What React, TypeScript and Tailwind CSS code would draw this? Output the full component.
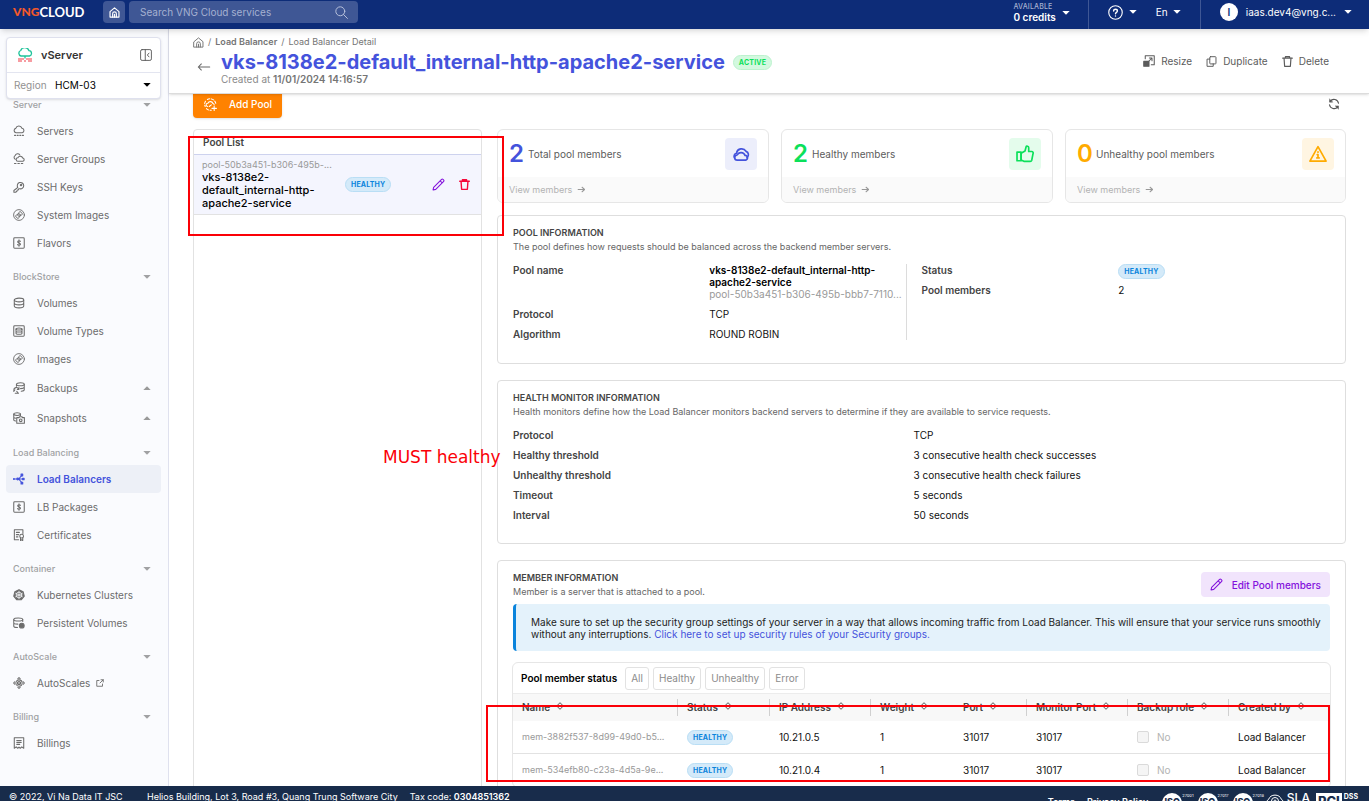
import type { ReactNode } from 'react';

type IconProps = { className?: string; children: ReactNode; sw?: number };

function Svg({ className = 'size-3', children, sw = 1.4 }: IconProps) {
  return (
    <svg
      viewBox="0 0 16 16"
      className={`shrink-0 ${className}`}
      fill="none"
      stroke="currentColor"
      strokeWidth={sw}
      strokeLinecap="round"
      strokeLinejoin="round"
      aria-hidden="true"
    >
      {children}
    </svg>
  );
}

function Caret({ up = false, className = '' }: { up?: boolean; className?: string }) {
  return (
    <svg viewBox="0 0 8 4" className={`h-1 w-2 shrink-0 ${className}`} fill="currentColor" aria-hidden="true">
      <path d={up ? 'M0.3 4 L4 0.2 L7.7 4Z' : 'M0.3 0 L4 3.8 L7.7 0Z'} />
    </svg>
  );
}

const homePath = (
  <>
    <path d="M1.500 6.800 8 1.300l6.500 5.500V14.700H1.500Z" />
    <path d="M5.300 14.500V9.800a2.700 2.700 0 0 1 5.400 0v4.700M8 14.500V10.500" />
  </>
);

const icons = {
  server: (
    <>
      <path d="M4 10.200a2.900 2.900 0 0 1-.3-5.700 4.300 4.300 0 0 1 8.200-.2A3 3 0 0 1 12.300 10.200Z" />
      <path d="M2 13.800h1.500M5.500 13.800h1.500M9 13.800h1.500M12.500 13.800h1.500" />
    </>
  ),
  serverGroup: (
    <>
      <path d="M3 8.300A2.700 2.700 0 0 1 2.800 3.500a3.500 3.500 0 0 1 6.300-.8" />
      <path d="M6.500 11a2.300 2.300 0 0 1 0-4.600 3.400 3.400 0 0 1 6.400.3A2.200 2.200 0 0 1 13.300 11Z" />
      <path d="M2 14h2M6.500 14h2M11 14h2" />
    </>
  ),
  key: (
    <>
      <path d="M6.400 8.600A4.300 4.300 0 1 1 9 10.400L7.600 10.300 7.200 12 5.600 12.100 5.300 13.700 3.500 15H1.200V12.700Z" />
      <circle cx="10.700" cy="5.400" r="1" />
    </>
  ),
  disc: (
    <g strokeWidth="1.200">
      <circle cx="8" cy="8" r="7.200" />
      <circle cx="8" cy="8" r="1.700" />
      <path d="M6.800 6.500 9 3.300a5 5 0 0 1 3.700 3.700L9.500 9.200M9.200 9.500 7 12.700A5 5 0 0 1 3.300 9L6.500 6.800" />
    </g>
  ),
  dollar: (
    <>
      <rect x="1" y="1" width="14" height="14" rx="1.200" />
      <path d="M10 5.800C9.500 4.600 6.300 4.500 6.200 6.300 6.100 8.200 10 7.600 10 9.700 9.900 11.500 6.500 11.400 6 10.100M8 3.800v8.400" />
    </>
  ),
  volume: (
    <>
      <ellipse cx="8" cy="4" rx="6.300" ry="2.500" />
      <path d="M1.700 4v8c0 1.400 2.800 2.500 6.300 2.500s6.300-1.100 6.300-2.500V4M1.700 8c0 1.400 2.800 2.500 6.300 2.500s6.300-1.100 6.300-2.500" />
    </>
  ),
  volumeType: (
    <>
      <rect x="1" y="1" width="14" height="14" rx="1.200" />
      <ellipse cx="8" cy="5.300" rx="4" ry="1.400" />
      <path d="M4 5.300v5.600c0 .8 1.800 1.400 4 1.400s4-.6 4-1.400V5.300M4 8c0 .8 1.800 1.400 4 1.400S12 8.800 12 8" />
    </>
  ),
  backup: (
    <>
      <ellipse cx="9.800" cy="3" rx="5.200" ry="2" />
      <path d="M4.600 3v2.700M15 3v7.300c0 1-1.700 1.800-4 1.900M15 6.800c0 1.200-2.200 2-5 2" />
      <path d="M1 11a3.500 3.500 0 0 1 6.700-1.500M8 7.500v2.300H5.700M1 12.500l1.500-1.800M3 15h3.500M5 12.500 7.300 15" />
    </>
  ),
  snapshot: (
    <>
      <ellipse cx="5.500" cy="2.800" rx="4.500" ry="1.800" />
      <path d="M1 3v7.500c0 .8 1 1.300 2.500 1.500M10 3v1.500M1 6.500c0 .9 1.300 1.500 3 1.700" />
      <path d="M5 7.500H8l.8-1.300h3l.8 1.300H15.200V15H5Z" />
      <circle cx="10.300" cy="11" r="1.800" />
    </>
  ),
  balancer: (
    <>
      <path d="M1 8h12M7.500 8 11.500 3.500M7.500 8l4 4.500" />
      <g fill="currentColor">
        <circle cx="6.300" cy="8" r="1.200" />
        <circle cx="1.200" cy="8" r=".5" />
        <rect x="10.700" y="1.500" width="2.300" height="2.300" />
        <rect x="10.700" y="12.200" width="2.300" height="2.300" />
        <rect x="12.800" y="7" width="2" height="2" />
      </g>
    </>
  ),
  certificate: (
    <>
      <path d="M7.500 14.300H1.800V1h11.400v5M4.500 4.500h4M4.500 7.500h3M4.500 10.500h2" />
      <circle cx="11.500" cy="9.500" r="2.500" />
      <path d="M10 11.800V15.300l1.500-1 1.500 1V11.800" />
    </>
  ),
  kube: (
    <>
      <path d="M8 1 13.500 3.600 15 9.500 11.200 14.300H4.800L1 9.500 2.500 3.600Z" fill="currentColor" />
      <g stroke="#fafbfe" strokeWidth="1">
        <circle cx="8" cy="8" r="3.800" />
        <path d="M8 3v10M3.500 5.700l9 4.600M12.500 5.700l-9 4.600" />
      </g>
    </>
  ),
  persistent: (
    <>
      <ellipse cx="7" cy="3.300" rx="6" ry="2.100" />
      <path d="M1 3.500v8.700c0 1 2.500 1.800 5 1.900M13 3.500V6M1 7.500c0 1 2.700 1.900 5.500 2" />
      <circle cx="11.700" cy="11.500" r="3.200" fill="currentColor" />
    </>
  ),
  autoscale: (
    <>
      <circle cx="8" cy="8" r="4.200" />
      <path d="M6 7 8 6l2 1v2.300L8 10.300 6 9.300ZM8 8v2" />
      <path d="M6.500 2.200 8 .8l1.500 1.400M6.500 13.800 8 15.200l1.500-1.400M2.200 6.500.8 8l1.400 1.500M13.800 6.500 15.200 8l-1.400 1.500" />
    </>
  ),
  bill: (
    <>
      <path d="M1.700 1h12.600v14l-2.600-1.800L9.700 15 8 13.500 6.300 15l-2-1.800L1.700 15Z" />
      <path d="M5 4.800h6M5 7.300h6M5 9.800h4" />
    </>
  ),
};

type NavItem = { label: string; icon: keyof typeof icons; expandable?: boolean; active?: boolean; external?: boolean };

const nav: { title: string; items: NavItem[] }[] = [
  {
    title: 'Server',
    items: [
      { label: 'Servers', icon: 'server' },
      { label: 'Server Groups', icon: 'serverGroup' },
      { label: 'SSH Keys', icon: 'key' },
      { label: 'System Images', icon: 'disc' },
      { label: 'Flavors', icon: 'dollar' },
    ],
  },
  {
    title: 'BlockStore',
    items: [
      { label: 'Volumes', icon: 'volume' },
      { label: 'Volume Types', icon: 'volumeType' },
      { label: 'Images', icon: 'disc' },
      { label: 'Backups', icon: 'backup', expandable: true },
      { label: 'Snapshots', icon: 'snapshot', expandable: true },
    ],
  },
  {
    title: 'Load Balancing',
    items: [
      { label: 'Load Balancers', icon: 'balancer', active: true },
      { label: 'LB Packages', icon: 'dollar' },
      { label: 'Certificates', icon: 'certificate' },
    ],
  },
  {
    title: 'Container',
    items: [
      { label: 'Kubernetes Clusters', icon: 'kube' },
      { label: 'Persistent Volumes', icon: 'persistent' },
    ],
  },
  { title: 'AutoScale', items: [{ label: 'AutoScales', icon: 'autoscale', external: true }] },
  { title: 'Billing', items: [{ label: 'Billings', icon: 'bill' }] },
];

function TopBar() {
  return (
    <header className="relative z-20 flex h-[29px] shrink-0 items-stretch bg-[#0d2c78] text-white shadow-md shadow-black/10">
      <div className="flex items-center pb-[5px] pl-[13px]">
        <a href="#home" className="flex w-[90px] items-center font-[Lato]" aria-label="VNG Cloud">
          <span className="text-[12px] leading-4 font-black text-[#f4592a]">VNG</span>
          <span className="text-[13px] leading-4 font-bold">CLOUD</span>
        </a>
        <button type="button" aria-label="Home" className="flex size-[22px] items-center justify-center rounded-sm bg-[#3f5795]">
          <Svg className="size-[11px]" sw={1.700}>{homePath}</Svg>
        </button>
        <div className="ml-1 flex h-[22px] w-[229px] items-center rounded-sm bg-[#3f5795] pr-[10px] pl-[11px]">
          <input
            type="search"
            aria-label="Search VNG Cloud services"
            placeholder="Search VNG Cloud services"
            className="min-w-0 flex-1 bg-transparent text-[10px] leading-4 text-white outline-none placeholder:text-[#a5b1d1]"
          />
          <Svg className="size-[13px] text-[#b9c2dc]" sw={1.200}>
            <circle cx="6.500" cy="6.500" r="5.500" />
            <path d="m10.500 10.500 4.800 4.800" />
          </Svg>
        </div>
      </div>
      <div className="ml-auto flex items-stretch">
        <button type="button" className="flex items-center gap-1.5 border-r border-[#3f5795] pr-[18px] pb-1">
          <span className="flex flex-col items-start">
            <span className="text-[7px] leading-[9px] font-medium tracking-wide text-[#a5b1d1]">AVAILABLE</span>
            <span className="text-[10px] leading-3 font-semibold">0 credits</span>
          </span>
          <Caret />
        </button>
        <div className="flex items-center border-r border-[#3f5795] pr-[19px] pb-[5px] pl-[19px]">
          <button type="button" aria-label="Help" className="flex items-center gap-1.5">
            <Svg className="size-[15px]" sw={1.200}>
              <circle cx="8" cy="8" r="7.200" />
              <path d="M6 6.400C6 3.800 10 3.900 10 6.300 10 7.900 8 7.800 8 9.400M8 11.600v.2" strokeWidth="1.500" />
            </Svg>
            <Caret />
          </button>
          <button type="button" className="ml-[19px] flex items-center gap-[5px] text-[10px] leading-3">
            En
            <Caret />
          </button>
        </div>
        <button type="button" className="flex items-center pr-[17px] pb-[5px] pl-[19px] text-[10px] leading-3">
          <span className="flex size-[18px] items-center justify-center rounded-full bg-white text-[10px] font-semibold text-[#0d2c78]">I</span>
          <span className="ml-2">iaas.dev4@vng.c...</span>
          <Caret className="ml-2" />
        </button>
      </div>
    </header>
  );
}

function Sidebar() {
  return (
    <aside className="relative flex w-[169px] shrink-0 flex-col overflow-hidden border-r border-[#dfe1ee] bg-[#fafbfe]">
      <div className="relative z-10 mx-1.5 mt-2 mr-[7px] shrink-0 rounded border border-[#dfe1ee] bg-white shadow-sm">
        <div className="flex h-[35px] items-center border-b border-[#e3e5f0] px-[10px]">
          <svg viewBox="0 0 16 14" className="h-[14px] w-4" fill="none" strokeLinejoin="round" aria-hidden="true">
            <path d="M4 8a2.900 2.900 0 0 1-.3-5.500 4.400 4.400 0 0 1 8.300.2A2.700 2.700 0 0 1 12.500 8Z" stroke="#1fc39a" strokeWidth="1.300" />
            <path d="M8 8v2.500" stroke="#1fc39a" strokeWidth="1.300" />
            <path d="M1 11h6M9 11h6M1 13h4M7 13h2M11 13h4" stroke="#f03a47" strokeWidth="1.200" />
          </svg>
          <span className="ml-2 text-[11px] leading-4 font-semibold text-[#333]">vServer</span>
          <button type="button" aria-label="Collapse menu" className="-mr-0.5 ml-auto text-[#555]">
            <Svg sw={1.200}>
              <rect x=".8" y=".8" width="14.400" height="14.400" rx="2" />
              <path d="M7 1v14M12 5.500 9.800 8 12 10.500" />
            </Svg>
          </button>
        </div>
        <div className="flex h-[25px] items-center px-[7px] pb-px text-[10px] leading-3">
          <label htmlFor="region" className="w-[41px] text-[#929292]">Region</label>
          <select id="region" className="min-w-0 flex-1 appearance-none bg-transparent text-black outline-none">
            <option>HCM-03</option>
          </select>
          <Caret className="pointer-events-none mr-[2px] text-black" />
        </div>
      </div>
      <nav className="-mt-[6px] flex flex-col gap-2 pr-[7px] pl-1.5" aria-label="vServer">
        {nav.map((group) => (
          <section key={group.title}>
            <button type="button" className="flex h-6 w-full items-center justify-between pr-[10px] pl-[7px] text-[9px] leading-3 font-medium text-[#a0a1a3]">
              {group.title}
              <Caret />
            </button>
            {group.items.map((item) => (
              <a
                key={item.label}
                href="#nav"
                aria-current={item.active ? 'page' : undefined}
                className={`flex items-center rounded pr-[10px] pl-[7px] text-[10px] leading-3 ${item.expandable ? 'h-[30px]' : 'h-7'} ${
                  item.active ? 'bg-[#edf0f7] font-semibold text-[#4453dc]' : 'text-[#6c6c6c]'
                }`}
              >
                <Svg>{icons[item.icon]}</Svg>
                <span className="ml-3">{item.label}</span>
                {item.external && (
                  <Svg className="ml-1.5 size-2" sw={1.800}>
                    <path d="M6 3H1.500v11.500H13V10M8 8l6.500-6.500M10 1.500h4.500V6" />
                  </Svg>
                )}
                {item.expandable && <Caret up className="ml-auto text-[#999]" />}
              </a>
            ))}
          </section>
        ))}
      </nav>
    </aside>
  );
}

function Badge({ tone = 'blue', children }: { tone?: 'blue' | 'green'; children: ReactNode }) {
  return (
    <span
      className={`inline-flex h-[15px] items-center rounded-full border px-[5px] text-[7px] leading-none font-bold tracking-wide ${
        tone === 'blue' ? 'border-[#b9def5] bg-[#d4eaf9] text-[#0a84dc]' : 'border-[#bdf2cf] bg-[#d3f9df] text-[#0be05a]'
      }`}
    >
      {children}
    </span>
  );
}

const pencil = <path d="M1.300 14.700 2 11.500 11.800 1.700a1.200 1.200 0 0 1 1.700 0l.9.900a1.200 1.200 0 0 1 0 1.700L4.600 14ZM10 3.500 12.600 6" />;
const trash = (
  <>
    <path d="M1 3.200h14M5 3V1h6v2" />
    <path d="M3 3.500 3.800 15h8.400L13 3.500" />
  </>
);

function PageHeader() {
  return (
    <div className="relative z-10 flex h-[65px] shrink-0 items-start border-b border-[#dcdcdc] bg-white pr-10 pl-6 shadow-sm">
      <div className="flex flex-col pt-[7px]">
        <nav aria-label="Breadcrumb" className="flex h-3 items-center gap-1 text-[9px] leading-3 text-[#757575]">
          <a href="#home" aria-label="Home"><Svg className="size-[11px]">{homePath}</Svg></a>
          <span>/</span>
          <a href="#lb" className="font-semibold">Load Balancer</a>
          <span>/</span>
          <span>Load Balancer Detail</span>
        </nav>
        <div className="flex items-start">
          <button type="button" aria-label="Back" className="mt-3 mr-1.5 ml-1 text-[#666]">
            <Svg className="size-[14px]" sw={1.200}>
              <path d="M14.500 8h-13M5 4.500 1.500 8 5 11.500" />
            </Svg>
          </button>
          <div className="ml-1">
            <div className="flex items-center gap-2 pt-0.5">
              <h1 className="text-[20px] leading-6 font-bold text-[#4453dc]">vks-8138e2-default_internal-http-apache2-service</h1>
              <Badge tone="green">ACTIVE</Badge>
            </div>
            <p className="text-[10px] leading-[11px] text-[#8a8a8a]">
              Created at <span className="font-semibold text-[#757575]">11/01/2024 14:16:57</span>
            </p>
          </div>
        </div>
      </div>
      <div className="mt-[26px] ml-auto flex items-center gap-[14px] text-[10px] leading-3 text-[#5c5c5c]">
        <button type="button" className="flex items-center gap-1.5">
          <Svg>
            <path d="M3 5V1h12v12h-4M8 8l4-4M8.500 4H12v3.500" />
            <rect x="1" y="8.500" width="7" height="6.500" fill="currentColor" />
          </Svg>
          Resize
        </button>
        <button type="button" className="flex items-center gap-1.5">
          <Svg className="size-[11px]">
            <rect x="5.500" y="1" width="9" height="10.500" rx="1" />
            <path d="M5.500 4.500h-4V15h9v-3.500" />
          </Svg>
          Duplicate
        </button>
        <button type="button" className="flex items-center gap-1.5">
          <Svg className="size-[11px]" sw={1.700}>{trash}</Svg>
          Delete
        </button>
      </div>
    </div>
  );
}

const stats = [
  {
    value: '2',
    label: 'Total pool members',
    number: 'text-[#4453dc]',
    box: 'bg-[#eceefb] text-[#4453dc]',
    icon: (
      <>
        <path d="M4.800 13.500a2.300 2.300 0 0 1-.2-4.600 3.800 3.800 0 0 1 7 .3 2.200 2.200 0 0 1 .6 4.300Z" />
        <path d="M2.200 11.500a3 3 0 0 1 1.800-4.300 4.600 4.600 0 0 1 8.500-1.500 3.200 3.200 0 0 1 .9 5.500" />
      </>
    ),
  },
  {
    value: '2',
    label: 'Healthy members',
    number: 'text-[#0be05a]',
    box: 'bg-[#e4fcec] text-[#0be05a]',
    icon: (
      <>
        <path d="M.9 6.300h3.600V14H.9Z" />
        <path d="M4.500 7.300 8 5.300 9 1.500c.3-.9 2.300-.6 2.300 1V5.800H14c1 0 1.400.9 1.200 1.700l-1.200 6c-.2.700-.7 1-1.400 1H7L4.500 13.300Z" />
      </>
    ),
  },
  {
    value: '0',
    label: 'Unhealthy pool members',
    number: 'text-[#ffab00]',
    box: 'bg-[#fff5e2] text-[#ffab00]',
    icon: (
      <>
        <path d="M8 1.500 15.200 14.300H.8Z" />
        <path d="M8 6v.5M7.300 8.500H8v3M7 11.500h2" />
      </>
    ),
  },
];

function Stats() {
  return (
    <div className="grid grid-cols-[272fr_272fr_281fr] gap-3">
      {stats.map((s) => (
        <article key={s.label} className="overflow-hidden rounded-md border border-[#e6e6e6] bg-white">
          <div className="flex h-[47px] items-center px-[11px]">
            <span className={`w-[19px] text-[24px] leading-6 font-semibold ${s.number}`}>{s.value}</span>
            <span className="text-[10px] leading-3 text-[#5c5c5c]">{s.label}</span>
            <span className={`ml-auto flex size-8 items-center justify-center rounded ${s.box}`}>
              <Svg className="size-[18px]" sw={1.500}>{s.icon}</Svg>
            </span>
          </div>
          <a href="#members" className="flex h-[25px] items-center gap-[5px] bg-[#fafafa] px-[11px] text-[9px] leading-3 text-[#b3b3b3]">
            View members
            <Svg className="size-[9px] text-[#999]" sw={1.800}>
              <path d="M2 8h11M9 4l4.500 4L9 12" />
            </Svg>
          </a>
        </article>
      ))}
    </div>
  );
}

function CardTitle({ title, text }: { title: string; text: string }) {
  return (
    <div>
      <h2 className="text-[9px] leading-4 font-semibold text-[#444]">{title}</h2>
      <p className="text-[9px] leading-3 text-[#666]">{text}</p>
    </div>
  );
}

function Field({ label, children }: { label: string; children: ReactNode }) {
  return (
    <div className="grid grid-cols-2 text-[10px] leading-3">
      <dt className="font-semibold text-[#444]">{label}</dt>
      <dd className="min-w-0 text-[#111]">{children}</dd>
    </div>
  );
}

const card = 'rounded border border-[#dedede] bg-white px-[15px] pt-[9px]';

const columns = [
  { label: 'Name', width: 'w-[165px]', divider: true },
  { label: 'Status', width: 'w-[92px]', divider: true },
  { label: 'IP Address', width: 'w-[101px]', divider: true },
  { label: 'Weight', width: 'w-[83px]', divider: false },
  { label: 'Port', width: 'w-[73px]', divider: true },
  { label: 'Monitor Port', width: 'w-[101px]', divider: true },
  { label: 'Backup role', width: 'w-[101px]', divider: true },
  { label: 'Created by', width: 'w-[101px]', divider: false },
];

const members = [
  { name: 'mem-3882f537-8d99-49d0-b5...', ip: '10.21.0.5' },
  { name: 'mem-534efb80-c23a-4d5a-9e...', ip: '10.21.0.4' },
];

function Members() {
  return (
    <section className={`${card} pb-4`}>
      <div className="flex items-start justify-between">
        <CardTitle title="MEMBER INFORMATION" text="Member is a server that is attached to a pool." />
        <button type="button" className="mt-[2px] flex h-[25px] items-center gap-[9px] rounded bg-[#f1e4fc] px-[9px] text-[10px] leading-3 font-medium text-[#8312dc]">
          <Svg className="size-[13px]" sw={1.300}>{pencil}</Svg>
          Edit Pool members
        </button>
      </div>
      <p className="mt-[6px] rounded border-l-[3px] border-[#0a84dc] bg-[#e4f2fb] pt-3 pr-2 pb-[11px] pl-[15px] text-[10px] leading-3 text-[#222]">
        Make sure to set up the security group settings of your server in a way that allows incoming traffic from Load Balancer. This will ensure that your service runs smoothly without any interruptions.{' '}
        <a href="#security" className="text-[#4453dc]">Click here to set up security rules of your Security groups.</a>
      </p>
      <div className="-mx-px mt-[11px] overflow-hidden rounded-md border border-[#e6e6e6]">
        <div className="flex h-[30px] items-center gap-1 pl-2 text-[10px] leading-3">
          <span className="mr-1 font-semibold text-black">Pool member status</span>
          {['All', 'Healthy', 'Unhealthy', 'Error'].map((f) => (
            <button key={f} type="button" className="h-[23px] rounded-[3px] border border-[#e2e2e2] px-[5px] text-[#8c8c8c]">
              {f}
            </button>
          ))}
        </div>
        <table className="w-full table-fixed text-left text-[10px] leading-3">
          <thead className="border-t border-[#ececec] bg-[#f8f8f8]">
            <tr className="h-[27px]">
              {columns.map((c) => (
                <th key={c.label} className={`p-0 font-semibold text-[#444] ${c.width}`}>
                  <button type="button" className={`flex h-[17px] w-full items-center gap-[7px] pl-[9px] whitespace-nowrap ${c.divider ? 'border-r border-[#d0d0d0]' : ''}`}>
                    {c.label}
                    <svg viewBox="0 0 6 8" className="mb-0.5 h-2 w-1.5" fill="none" stroke="#555" aria-hidden="true">
                      <path d="M.5 3.200 3 .7l2.500 2.500M.5 4.800 3 7.300l2.500-2.500" />
                    </svg>
                  </button>
                </th>
              ))}
            </tr>
          </thead>
          <tbody>
            {members.map((m) => (
              <tr key={m.ip} className="h-[33px] border-b border-[#e2e2e2] text-[#111] last:border-0">
                <td className="p-0 pl-[9px] text-[9px] text-[#999]">{m.name}</td>
                <td className="p-0 pt-px pl-[9px] align-middle"><span className="flex"><Badge>HEALTHY</Badge></span></td>
                <td className="p-0 pl-[9px]">{m.ip}</td>
                <td className="p-0 pl-[9px]">1</td>
                <td className="p-0 pl-[9px]">31017</td>
                <td className="p-0 pl-[9px]">31017</td>
                <td className="p-0 pl-[9px]">
                  <label className="flex items-center gap-2 text-[#b3b3b3]">
                    <input type="checkbox" disabled className="size-3 appearance-none rounded-[2px] border border-[#dadada] bg-[#f5f5f5]" />
                    No
                  </label>
                </td>
                <td className="p-0 pl-[9px]">Load Balancer</td>
              </tr>
            ))}
          </tbody>
        </table>
      </div>
    </section>
  );
}

function PoolList() {
  return (
    <section className="rounded-t border border-[#e2e2e2] bg-white">
      <h2 className="h-[25px] border-b border-[#cdd2ee] pl-[9px] text-[10px] leading-6 font-semibold text-[#444]">Pool List</h2>
      <div className="flex items-center border-b border-[#e2e2e2] bg-[#f4f5fe] py-1 pr-[11px] pl-2">
        <div className="w-[143px] shrink-0">
          <p className="text-[9px] leading-3 text-[#999]">pool-50b3a451-b306-495b-...</p>
          <p className="w-[120px] text-[11px] leading-[13px] font-medium text-black">vks-8138e2-default_internal-http-apache2-service</p>
        </div>
        <Badge>HEALTHY</Badge>
        <button type="button" aria-label="Edit pool" className="ml-auto text-[#8312dc]">
          <Svg className="size-[13px]" sw={1.300}>{pencil}</Svg>
        </button>
        <button type="button" aria-label="Delete pool" className="ml-[14px] text-[#f5093a]">
          <Svg className="size-[11px]" sw={2}>{trash}</Svg>
        </button>
      </div>
    </section>
  );
}

function Content() {
  return (
    <main className="relative flex-1 overflow-hidden bg-white pr-[23px] pl-6">
      <div className="-mt-1 flex h-7 items-center justify-between">
        <button type="button" className="flex h-7 items-center gap-3 rounded-b bg-[#ff8200] pr-[10px] pl-[11px] text-[10px] leading-3 font-medium text-white shadow">
          <Svg className="size-[13px]" sw={1.300}>
            <path d="M14.500 6.500A7 7 0 0 0 4 2M1.800 4A7 7 0 0 0 1.500 10.500M3 13a7 7 0 0 0 6 2" strokeDasharray="3 2" />
            <path d="M4.500 10.500a2 2 0 0 1 .3-4 3.300 3.300 0 0 1 6.200.3 2 2 0 0 1 1.500 1.500M6.500 10.500 9 8.500M12.500 10v5.500M9.800 12.800h5.500" />
          </Svg>
          Add Pool
        </button>
        <button type="button" aria-label="Refresh" className="mr-[6px] text-[#555]">
          <Svg sw={1.500}>
            <path d="M14 7A6.200 6.200 0 0 0 3 4.200M2 9a6.200 6.200 0 0 0 11 2.800" />
            <path d="M2 1.500V5.500H6ZM14 14.500v-4H10Z" fill="currentColor" strokeWidth=".6" />
          </Svg>
        </button>
      </div>
      <div className="mt-[11px] grid grid-cols-[289fr_849fr] items-stretch gap-[15px]">
        <PoolList />
        <div className="min-w-0">
          <Stats />
          <section className={`${card} mt-3 pb-[23px]`}>
            <CardTitle title="POOL INFORMATION" text="The pool defines how requests should be balanced across the backend member servers." />
            <div className="mt-[11px] grid grid-cols-2">
              <dl className="mr-[15px] flex flex-col gap-2 border-r border-[#dcdcdc]">
                <Field label="Pool name">
                  <p className="font-semibold text-black">vks-8138e2-default_internal-http-apache2-service</p>
                  <p className="truncate text-[#999]">pool-50b3a451-b306-495b-bbb7-7110...</p>
                </Field>
                <Field label="Protocol">TCP</Field>
                <Field label="Algorithm">ROUND ROBIN</Field>
              </dl>
              <dl className="mr-[15px] flex flex-col gap-2">
                <Field label="Status">
                  <span className="flex h-3 items-center pt-0.5"><Badge>HEALTHY</Badge></span>
                </Field>
                <Field label="Pool members">2</Field>
              </dl>
            </div>
          </section>
          <section className={`${card} mt-4 pb-[22px]`}>
            <CardTitle title="HEALTH MONITOR INFORMATION" text="Health monitors define how the Load Balancer monitors backend servers to determine if they are available to service requests." />
            <dl className="mt-[11px] mr-4 flex flex-col gap-2">
              <Field label="Protocol">TCP</Field>
              <Field label="Healthy threshold">3 consecutive health check successes</Field>
              <Field label="Unhealthy threshold">3 consecutive health check failures</Field>
              <Field label="Timeout">5 seconds</Field>
              <Field label="Interval">50 seconds</Field>
            </dl>
          </section>
          <div className="mt-4">
            <Members />
          </div>
        </div>
      </div>
    </main>
  );
}

function Iso({ code }: { code: string }) {
  return (
    <span className="flex items-start">
      <span className="flex size-5 justify-center rounded-full bg-white pt-1 text-[9px] leading-[9px] font-extrabold text-[#182c4b]">ISO</span>
      <span className="text-[4px] leading-[6px]">{code}</span>
    </span>
  );
}

function Footer() {
  return (
    <footer className="relative z-20 flex h-[15px] shrink-0 items-start justify-between overflow-hidden bg-[#182c4b] pr-[11px] pl-[9px] text-[9px] leading-3 text-white">
      <div className="flex pt-[5px]">
        <span className="w-[138px]">© 2022, Vi Na Data IT JSC</span>
        <span>Helios Building, Lot 3, Road #3, Quang Trung Software City</span>
        <span className="ml-3">Tax code: <b className="font-semibold">0304851362</b></span>
      </div>
      <div className="flex items-start pt-[7px]">
        <a href="#terms" className="mt-[3px] font-semibold">Terms</a>
        <a href="#privacy" className="mt-[3px] mr-[14px] ml-3 font-semibold">Privacy Policy</a>
        <div className="flex gap-1">
          <Iso code="27001" />
          <Iso code="27017" />
          <Iso code="27018" />
        </div>
        <svg viewBox="0 0 20 18" className="ml-px h-[18px] w-5" fill="none" stroke="#fff" aria-hidden="true">
          <path d="M4 14a4 4 0 0 1-.5-7.500A7 7 0 0 1 16.500 6.500 4 4 0 0 1 16 14" />
          <circle cx="10" cy="8" r="3.500" />
          <circle cx="10" cy="8" r="1" />
        </svg>
        <span className="ml-0.5 text-[12px] leading-[9px] font-medium">SLA</span>
        <span className="ml-1.5 bg-white px-0.5 pt-0.5 text-[13px] leading-[12px] font-extrabold text-[#182c4b]">PCI</span>
        <span className="ml-0.5 text-[7px] leading-2 font-bold">DSS</span>
      </div>
    </footer>
  );
}

export default function App() {
  return (
    <div className="relative flex h-screen flex-col overflow-hidden bg-white font-[Inter,sans-serif]">
      <TopBar />
      <div className="flex min-h-0 flex-1">
        <Sidebar />
        <div className="flex min-w-0 flex-1 flex-col">
          <PageHeader />
          <Content />
        </div>
      </div>
      <Footer />
      <div className="pointer-events-none absolute top-[136px] left-[188px] z-30 h-[100px] w-[316px] border-2 border-[#fb0007]" />
      <div className="pointer-events-none absolute top-[705px] left-[486px] z-30 h-[77px] w-[844px] border-2 border-[#fb0007]" />
      <p className="pointer-events-none absolute top-[447px] left-[383px] z-30 font-['DejaVu_Sans'] text-[17px] leading-[20px] text-[#fb0007]">MUST healthy</p>
    </div>
  );
}
